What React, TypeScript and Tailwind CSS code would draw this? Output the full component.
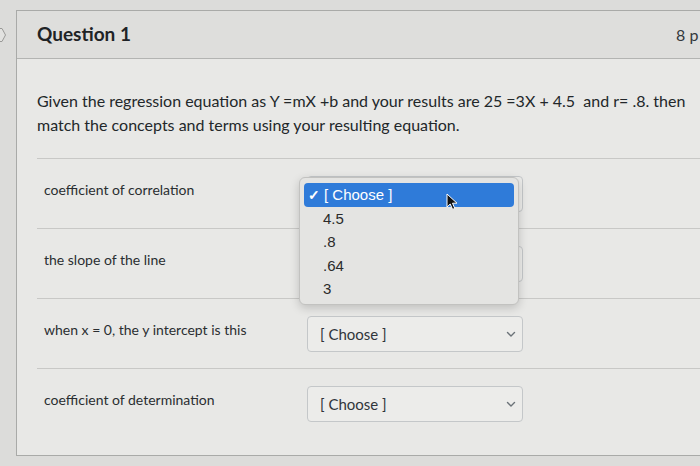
const rows = [
  'coefficient of correlation',
  'the slope of the line',
  'when x = 0, the y intercept is this',
  'coefficient of determination',
];

const options = ['4.5', '.8', '.64', '3'];

const Chevron = () => (
  <svg width="10" height="7" viewBox="0 0 10 7" className="shrink-0">
    <polyline points="1.5,1.5 5,5 8.5,1.5" fill="none" stroke="#6b7278" strokeWidth="1.4" strokeLinecap="round" strokeLinejoin="round" />
  </svg>
);

const App = () => {
  return (
    <div
      className="relative w-[700px] h-[466px] overflow-hidden bg-[#dcdcda] flex pt-[10px] text-[#25292c]"
      style={{ fontFamily: 'Lato, "Open Sans", sans-serif' }}
    >
      {/* left nav marker */}
      <div className="w-[16px] shrink-0 relative">
        <svg width="10" height="18" viewBox="0 0 10 18" className="mt-[16px] -ml-[3px]">
          <path d="M0.5 2.5 H5 L8.5 9 L5 15.5 H0.5" fill="#e2e2e0" stroke="#9a9a98" strokeWidth="1" />
        </svg>
      </div>

      {/* question card */}
      <div className="w-[720px] shrink-0 h-[446px] border-l border-t border-b border-[#a9aaa8] bg-[#e8e8e6] flex flex-col">
        <div className="h-[48px] shrink-0 border-b border-[#b3b4b2] bg-[#dededc] flex items-center pl-[20px]">
          <div className="w-[639px] text-[19px] font-bold text-[#1f2326]">Question 1</div>
          <div className="text-[16px] text-[#33383c]">8 p</div>
        </div>

        <div className="pl-[20px] pt-[30px] flex flex-col">
          <p className="text-[16px] leading-[24px] text-[#22272a] mb-[21px] w-[670px]">
            Given the regression equation as Y =mX +b and your results are 25 =3X + 4.5&nbsp; and r= .8. then match the concepts and terms using your resulting equation.
          </p>

          {rows.map((label, i) => (
            <div key={label} className="h-[70px] border-t border-[#c8c8c6] flex items-start pt-[17px]">
              <div className="w-[270px] pl-[7px] pt-[4px] text-[14px] leading-[20px] text-[#2a2e31]">{label}</div>
              <div className="w-[216px] h-[36px] rounded-[4px] border border-[#c4c7c9] bg-[#ececea] flex items-center justify-between pl-[12px] pr-[6px]">
                <span className="text-[15px] text-[#30353a]">{i > 1 ? '[ Choose ]' : ''}</span>
                <Chevron />
              </div>
            </div>
          ))}
        </div>
      </div>

      {/* open select menu */}
      <div
        className="absolute left-[299px] top-[177px] w-[220px] h-[128px] rounded-[6px] border border-[#c2c2c0] bg-[#e4e4e2] shadow-[0_3px_10px_rgba(0,0,0,0.18)] px-[4px] pt-[5px]"
        style={{ fontFamily: '"Liberation Sans", Arial, sans-serif' }}
      >
        <div className="h-[24px] rounded-[4px] bg-[#2f7bd9] text-white text-[15px] flex items-center pl-[4px]">
          <span className="w-[16px] text-[14px] font-bold">✓</span>
          <span>[ Choose ]</span>
        </div>
        {options.map((o) => (
          <div key={o} className="h-[23.5px] flex items-center pl-[19px] text-[15px] text-[#2b2b2b]">
            {o}
          </div>
        ))}
      </div>

      {/* mouse pointer */}
      <svg width="14" height="18" viewBox="0 0 14 18" className="absolute left-[446px] top-[193px]">
        <path d="M1 1 L1 14 L4.2 11 L6.6 16.4 L8.8 15.4 L6.5 10.2 L11 10.2 Z" fill="#111" stroke="#fff" strokeWidth="1" strokeLinejoin="round" />
      </svg>
    </div>
  );
};

export default App;
